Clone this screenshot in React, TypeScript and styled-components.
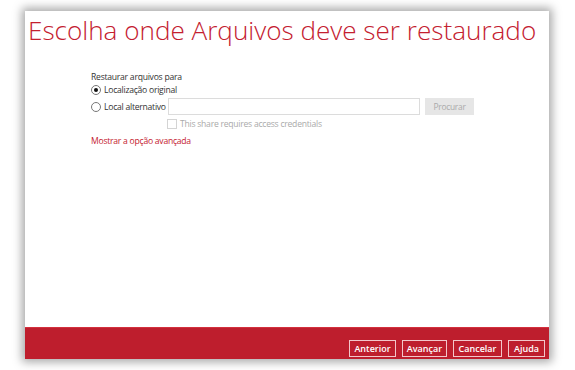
import React from "react";
import styled, { createGlobalStyle } from "styled-components";

const Global = createGlobalStyle`
  html, body { margin: 0; padding: 0; background: #ffffff; }
  body { font-family: "Open Sans", "Noto Sans", sans-serif; }
  * { box-sizing: border-box; }
`;

const Stage = styled.div`
  width: 575px;
  height: 370px;
  padding: 11px 26px 11px 25px;
`;

const Panel = styled.div`
  width: 524px;
  height: 348px;
  background: #ffffff;
  display: flex;
  flex-direction: column;
  box-shadow: 0 0 9px 3px rgba(0, 0, 0, 0.35);
`;

const Title = styled.h1`
  margin: 0;
  padding: 2px 0 0 3px;
  font-family: "Open Sans", sans-serif;
  font-weight: 300;
  font-size: 26.1px;
  line-height: 34px;
  color: #c4202f;
  white-space: nowrap;
`;

const Content = styled.div`
  flex: 1;
  padding: 25px 0 0 66px;
  display: flex;
  flex-direction: column;
  font-family: "Open Sans", sans-serif;
  font-size: 8.6px;
  letter-spacing: -0.25px;
  color: #333333;
`;

const Label = styled.div`
  line-height: 10px;
  height: 9px;
`;

const Row = styled.div`
  display: flex;
  align-items: center;
  height: 17px;
  gap: 3px;
`;

const Radio = styled.span<{ $checked?: boolean }>`
  width: 10px;
  height: 10px;
  border-radius: 50%;
  border: 1px solid #777;
  background: #fff;
  display: inline-flex;
  align-items: center;
  justify-content: center;
  flex: none;
  &::after {
    content: "";
    width: 4px;
    height: 4px;
    border-radius: 50%;
    background: ${(p) => (p.$checked ? "#111" : "transparent")};
  }
`;

const RadioText = styled.span<{ $slot?: boolean }>`
  line-height: 12px;
  white-space: nowrap;
  width: ${(p) => (p.$slot ? "61px" : "auto")};
`;

const TextInput = styled.div`
  width: 252px;
  height: 17px;
  border: 1px solid #dcdcdc;
  background: #fff;
`;

const GrayButton = styled.div`
  margin-left: 2px;
  width: 49px;
  height: 17px;
  background: #e6e6e6;
  color: #aaaaaa;
  font-size: 8.4px;
  display: flex;
  align-items: center;
  justify-content: center;
`;

const CheckRow = styled.div`
  display: flex;
  align-items: center;
  gap: 3px;
  height: 12px;
  margin-top: 3px;
  padding-left: 76px;
  color: #aaaaaa;
`;

const Checkbox = styled.span`
  width: 10px;
  height: 10px;
  border: 1px solid #d4d4d4;
  background: #fff;
  flex: none;
`;

const AdvancedLink = styled.a`
  margin-top: 5px;
  color: #c4202f;
  line-height: 12px;
  height: 12px;
  text-decoration: none;
`;

const Footer = styled.div`
  height: 32px;
  background: #be1e2d;
  border-top: 1px solid #d4303d;
  display: flex;
  align-items: center;
  justify-content: flex-end;
  gap: 6px;
  padding: 9px 4px 0 0;
`;

const FooterButton = styled.button<{ $w: number }>`
  width: ${(p) => p.$w}px;
  height: 17px;
  border: 1.5px solid #f3c6ca;
  background: transparent;
  color: #ffffff;
  font-family: "Open Sans", sans-serif;
  font-weight: 600;
  font-size: 9px;
  padding: 0;
  display: flex;
  align-items: center;
  justify-content: center;
`;

export default function App() {
  return (
    <>
      <Global />
      <Stage>
        <Panel>
          <Title>Escolha onde Arquivos deve ser restaurado</Title>
          <Content>
            <Label>Restaurar arquivos para</Label>
            <Row>
              <Radio $checked />
              <RadioText>Localização original</RadioText>
            </Row>
            <Row>
              <Radio />
              <RadioText $slot>Local alternativo</RadioText>
              <TextInput />
              <GrayButton>Procurar</GrayButton>
            </Row>
            <CheckRow>
              <Checkbox />
              <span>This share requires access credentials</span>
            </CheckRow>
            <AdvancedLink>Mostrar a opção avançada</AdvancedLink>
          </Content>
          <Footer>
            <FooterButton $w={47}>Anterior</FooterButton>
            <FooterButton $w={45}>Avançar</FooterButton>
            <FooterButton $w={49}>Cancelar</FooterButton>
            <FooterButton $w={37}>Ajuda</FooterButton>
          </Footer>
        </Panel>
      </Stage>
    </>
  );
}
